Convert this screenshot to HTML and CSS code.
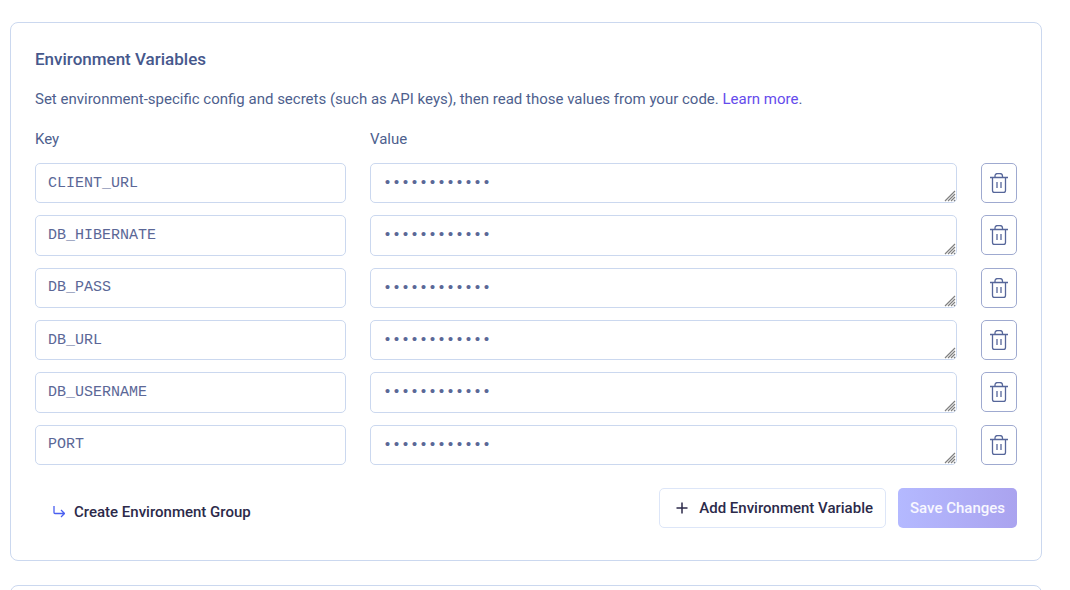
FILE: index.html
```html
<!DOCTYPE html>
<html lang="en">
<head>
<meta charset="utf-8">
<meta name="viewport" content="width=device-width, initial-scale=1">
<title>Environment Variables</title>
<link rel="stylesheet" href="styles.css">
</head>
<body>
<svg class="sprite" aria-hidden="true">
  <symbol id="trash" viewBox="0 0 20 20"><path d="M1 4.500h18M6 4.500V3a2.500 2.500 0 0 1 2.500-2.500h2.500A2.500 2.500 0 0 1 13.500 3v1.500M3.500 4.500v13a2 2 0 0 0 2 2h9a2 2 0 0 0 2-2v-13"/><path d="M8 9v6M12 9v6"/></symbol>
  <symbol id="grip" viewBox="0 0 12 12"><path d="M1 11 11 1M4 11l7-7M7 11l4-4M10 11l1-1"/></symbol>
</svg>
<main class="page">
  <section class="card">
    <h2 class="title">Environment Variables</h2>
    <p class="intro">Set environment-specific config and secrets (such as API keys), then read those values from your code. <a class="link" href="#">Learn more</a>.</p>
    <form class="form">
      <div class="row labels">
        <span id="key-label">Key</span>
        <span id="value-label">Value</span>
      </div>
      <div class="rows">
        <div class="row">
          <input class="field" type="text" aria-labelledby="key-label" value="CLIENT_URL">
          <div class="value"><textarea class="field area" rows="1" aria-labelledby="value-label">••••••••••••</textarea><svg class="grip" aria-hidden="true"><use href="#grip"/></svg></div>
          <button class="delete" type="button" aria-label="Delete CLIENT_URL"><svg class="trash"><use href="#trash"/></svg></button>
        </div>
        <div class="row">
          <input class="field" type="text" aria-labelledby="key-label" value="DB_HIBERNATE">
          <div class="value"><textarea class="field area" rows="1" aria-labelledby="value-label">••••••••••••</textarea><svg class="grip" aria-hidden="true"><use href="#grip"/></svg></div>
          <button class="delete" type="button" aria-label="Delete DB_HIBERNATE"><svg class="trash"><use href="#trash"/></svg></button>
        </div>
        <div class="row">
          <input class="field" type="text" aria-labelledby="key-label" value="DB_PASS">
          <div class="value"><textarea class="field area" rows="1" aria-labelledby="value-label">••••••••••••</textarea><svg class="grip" aria-hidden="true"><use href="#grip"/></svg></div>
          <button class="delete" type="button" aria-label="Delete DB_PASS"><svg class="trash"><use href="#trash"/></svg></button>
        </div>
        <div class="row">
          <input class="field" type="text" aria-labelledby="key-label" value="DB_URL">
          <div class="value"><textarea class="field area" rows="1" aria-labelledby="value-label">••••••••••••</textarea><svg class="grip" aria-hidden="true"><use href="#grip"/></svg></div>
          <button class="delete" type="button" aria-label="Delete DB_URL"><svg class="trash"><use href="#trash"/></svg></button>
        </div>
        <div class="row">
          <input class="field" type="text" aria-labelledby="key-label" value="DB_USERNAME">
          <div class="value"><textarea class="field area" rows="1" aria-labelledby="value-label">••••••••••••</textarea><svg class="grip" aria-hidden="true"><use href="#grip"/></svg></div>
          <button class="delete" type="button" aria-label="Delete DB_USERNAME"><svg class="trash"><use href="#trash"/></svg></button>
        </div>
        <div class="row">
          <input class="field" type="text" aria-labelledby="key-label" value="PORT">
          <div class="value"><textarea class="field area" rows="1" aria-labelledby="value-label">••••••••••••</textarea><svg class="grip" aria-hidden="true"><use href="#grip"/></svg></div>
          <button class="delete" type="button" aria-label="Delete PORT"><svg class="trash"><use href="#trash"/></svg></button>
        </div>
      </div>
      <div class="actions">
        <a class="group-link" href="#"><svg class="branch" viewBox="0 0 12 12" aria-hidden="true"><path d="M1 0v6.500a1 1 0 0 0 1 1h9.500M8 4l3.500 3.500L8 11"/></svg>Create Environment Group</a>
        <button class="button add" type="button"><svg class="plus" viewBox="0 0 12 12" aria-hidden="true"><path d="M6 .500v11M.500 6h11"/></svg>Add Environment Variable</button>
        <button class="button save" type="submit">Save Changes</button>
      </div>
    </form>
  </section>
  <section class="card next" aria-hidden="true"></section>
</main>
</body>
</html>
```
FILE: styles.css
```css
* { box-sizing: border-box; }
body {
  margin: 0;
  background: #fff;
  color: #4e5f8e;
  font: 15px/24px Roboto, "Liberation Sans", sans-serif;
}
svg { flex: none; fill: none; stroke: currentColor; }
.sprite { position: absolute; width: 0; height: 0; }
.page {
  display: grid;
  gap: 24px;
  height: 100vh;
  align-content: start;
  padding: 22px 28px 0 10px;
  overflow: hidden;
}
.card {
  padding: 24px 24px 32px;
  border: 1px solid #cbd8ef;
  border-radius: 8px;
}
.title { margin: 0 0 16px; color: #46588c; font-size: 17px; font-weight: 500; line-height: 24px; }
.intro { margin: 0 0 16px; }
.link { color: #654bec; text-decoration: none; }
.row {
  display: grid;
  grid-template-columns: 311fr 587fr 36px;
  column-gap: 24px;
}
.labels { margin-bottom: 12px; }
.rows { display: grid; grid-auto-rows: 1fr; row-gap: 12px; min-height: 302px; }
.field {
  display: block;
  width: 100%;
  height: 100%;
  min-width: 0;
  padding: 8px 12px;
  border: 1px solid #cbd8ef;
  border-radius: 5px;
  background: #fff;
  color: #5b6797;
  font: 15px/22px "Liberation Mono", monospace;
}
.area { padding-bottom: 6px; line-height: 24px; resize: none; overflow: hidden; }
.value { position: relative; }
.grip { position: absolute; right: 1px; bottom: 1px; width: 12px; height: 12px; color: #808080; stroke-width: 1.2; pointer-events: none; }
.delete {
  display: flex;
  align-items: center;
  justify-content: center;
  height: 40px;
  padding: 0;
  border: 1px solid #9faad0;
  border-radius: 5px;
  background: #fff;
  color: #56669a;
}
.trash { width: 20px; height: 20px; stroke-width: 1.3; }
.actions { display: flex; align-items: center; gap: 12px; margin-top: 23px; }
.group-link {
  display: flex;
  align-items: center;
  gap: 9px;
  margin-right: auto;
  padding: 8px 0 0 18px;
  color: #2c2a4a;
  font-weight: 500;
  text-decoration: none;
}
.branch { width: 12px; height: 12px; color: #4a5ff0; stroke-width: 1.3; }
.button {
  display: flex;
  align-items: center;
  height: 40px;
  padding: 0 12px;
  border: 1px solid #dde6f8;
  border-radius: 5px;
  background: #fff;
  color: #2c2a4a;
  font: inherit;
  font-weight: 500;
}
.plus { width: 12px; height: 12px; margin: 0 11px 0 4px; stroke-width: 1.5; }
.save { border: 0; background: linear-gradient(90deg, #b4b9ff, #aaa3ef); color: #f8f7ff; }
.next { min-height: 80px; }
```
